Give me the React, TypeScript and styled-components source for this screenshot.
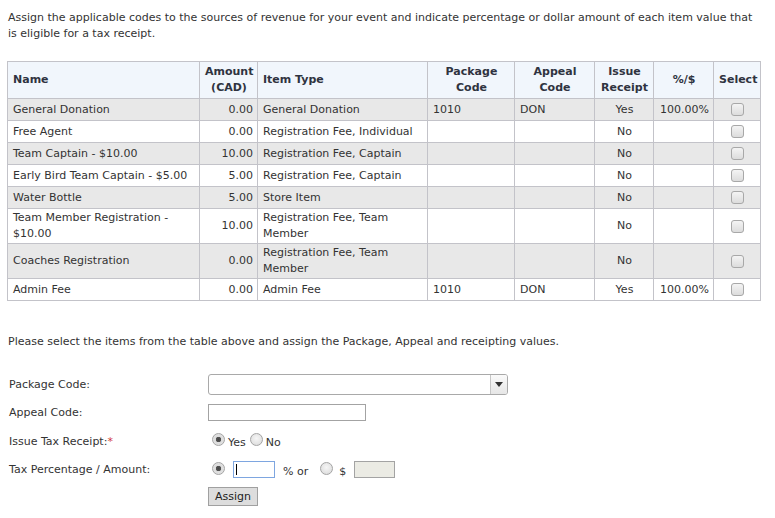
import React from 'react'
import styled, {createGlobalStyle} from 'styled-components'

const GlobalStyle = createGlobalStyle`
  body {
    margin: 0;
    background: #ffffff;
    font-family: "DejaVu Sans", Verdana, sans-serif;
    font-size: 11px;
    color: #333333;
  }
`

type Item = {
  name: string
  amount: string
  type: string
  pkg?: string
  appeal?: string
  receipt: string
  pct?: string
}

const ITEMS: Item[] = [
  {name: 'General Donation', amount: '0.00', type: 'General Donation', pkg: '1010', appeal: 'DON', receipt: 'Yes', pct: '100.00%'},
  {name: 'Free Agent', amount: '0.00', type: 'Registration Fee, Individual', receipt: 'No'},
  {name: 'Team Captain - $10.00', amount: '10.00', type: 'Registration Fee, Captain', receipt: 'No'},
  {name: 'Early Bird Team Captain - $5.00', amount: '5.00', type: 'Registration Fee, Captain', receipt: 'No'},
  {name: 'Water Bottle', amount: '5.00', type: 'Store Item', receipt: 'No'},
  {name: 'Team Member Registration - $10.00', amount: '10.00', type: 'Registration Fee, Team Member', receipt: 'No'},
  {name: 'Coaches Registration', amount: '0.00', type: 'Registration Fee, Team Member', receipt: 'No'},
  {name: 'Admin Fee', amount: '0.00', type: 'Admin Fee', pkg: '1010', appeal: 'DON', receipt: 'Yes', pct: '100.00%'},
]

const App = () => {
  return (
    <StyledPage>
      <GlobalStyle />
      <StyledIntro>
        Assign the applicable codes to the sources of revenue for your event and indicate percentage or dollar amount of each item value that
        is eligible for a tax receipt.
      </StyledIntro>

      <StyledTable>
        <colgroup>
          <col style={{width: 192}} />
          <col style={{width: 58}} />
          <col style={{width: 170}} />
          <col style={{width: 87}} />
          <col style={{width: 80}} />
          <col style={{width: 59}} />
          <col style={{width: 60}} />
          <col style={{width: 47}} />
        </colgroup>
        <thead>
          <tr>
            <StyledTh $align="left">Name</StyledTh>
            <StyledTh>Amount<br />(CAD)</StyledTh>
            <StyledTh $align="left">Item Type</StyledTh>
            <StyledTh>Package<br />Code</StyledTh>
            <StyledTh>Appeal<br />Code</StyledTh>
            <StyledTh>Issue<br />Receipt</StyledTh>
            <StyledTh>%/$</StyledTh>
            <StyledTh>Select</StyledTh>
          </tr>
        </thead>
        <tbody>
          {ITEMS.map((item, i) => (
            <StyledRow key={item.name} $shaded={i % 2 === 0}>
              <StyledTd>{item.name}</StyledTd>
              <StyledTd $align="right">{item.amount}</StyledTd>
              <StyledTd>{item.type}</StyledTd>
              <StyledTd>{item.pkg}</StyledTd>
              <StyledTd>{item.appeal}</StyledTd>
              <StyledTd $align="center">{item.receipt}</StyledTd>
              <StyledTd $align="right">{item.pct}</StyledTd>
              <StyledTd $align="center">
                <StyledCheck type="checkbox" />
              </StyledTd>
            </StyledRow>
          ))}
        </tbody>
      </StyledTable>

      <StyledNote>Please select the items from the table above and assign the Package, Appeal and receipting values.</StyledNote>

      <StyledForm>
        <StyledLabel $h={21}>Package Code:</StyledLabel>
        <StyledSelect>
          <StyledSelectArrow>
            <svg width="8" height="5" viewBox="0 0 8 5"><path d="M0 0h8L4 5z" fill="#333" /></svg>
          </StyledSelectArrow>
        </StyledSelect>

        <StyledLabel $h={17}>Appeal Code:</StyledLabel>
        <StyledText $w={158} />

        <StyledLabel $h={22}>Issue Tax Receipt:<StyledReq>*</StyledReq></StyledLabel>
        <StyledLine>
          <StyledRadio type="radio" name="receipt" defaultChecked />
          <span>Yes</span>
          <StyledRadio type="radio" name="receipt" />
          <span>No</span>
        </StyledLine>

        <StyledLabel $h={17}>Tax Percentage / Amount:</StyledLabel>
        <StyledLine>
          <StyledRadio type="radio" name="kind" defaultChecked />
          <StyledCaretBox>
            <StyledCaret />
          </StyledCaretBox>
          <StyledGap>% or</StyledGap>
          <StyledRadio type="radio" name="kind" />
          <StyledGap $tight>$</StyledGap>
          <StyledText $w={41} disabled />
        </StyledLine>

        <span />
        <StyledButton>Assign</StyledButton>
      </StyledForm>
    </StyledPage>
  )
}

const StyledPage = styled.div`
  padding: 10px 14px 10px 7px;
`

const StyledIntro = styled.p`
  margin: 0 0 0 1px;
  line-height: 16px;
`

const StyledTable = styled.table`
  margin-top: 19px;
  border-collapse: collapse;
  table-layout: fixed;
  width: 754px;
  border: 1px solid #c3c3c9;
`

const StyledTh = styled.th<{$align?: string}>`
  background: #f1f6fc;
  border: 1px solid #c3c3c9;
  font-weight: bold;
  color: #2f3340;
  line-height: 16px;
  padding: 2px 4px 2px 5px;
  height: 32px;
  text-align: ${p => p.$align || 'center'};
  vertical-align: middle;
`

const StyledRow = styled.tr<{$shaded: boolean}>`
  background: ${p => (p.$shaded ? '#e8e8e8' : '#ffffff')};
`

const StyledTd = styled.td<{$align?: string}>`
  border: 1px solid #c3c3c9;
  line-height: 16px;
  padding: 1px 4px 1px 5px;
  height: 19px;
  text-align: ${p => p.$align || 'left'};
  vertical-align: middle;
  white-space: normal;
`

const StyledCheck = styled.input`
  appearance: none;
  display: block;
  margin: 0 auto;
  width: 13px;
  height: 13px;
  border: 1px solid #a8a8a8;
  border-radius: 3px;
  background: linear-gradient(#f4f4f4, #dcdcdc);
`

const StyledNote = styled.p`
  margin: 33px 0 0 1px;
  line-height: 16px;
`

const StyledForm = styled.div`
  margin-top: 24px;
  display: grid;
  grid-template-columns: 199px auto;
  justify-content: start;
  align-items: center;
  row-gap: 9px;
  padding-left: 2px;
`

const StyledLabel = styled.div<{$h: number}>`
  height: ${p => p.$h}px;
  display: flex;
  align-items: center;
`

const StyledReq = styled.span`
  color: #d23a3a;
`

const StyledSelect = styled.div`
  width: 298px;
  height: 19px;
  border: 1px solid #a9a9a9;
  border-radius: 3px;
  background: #ffffff;
  display: flex;
  justify-content: flex-end;
`

const StyledSelectArrow = styled.div`
  width: 16px;
  border-left: 1px solid #c6c6c6;
  background: linear-gradient(#fafafa, #e6e6e6);
  border-radius: 0 2px 2px 0;
  display: flex;
  align-items: center;
  justify-content: center;
`

const StyledText = styled.input<{$w: number}>`
  box-sizing: border-box;
  width: ${p => p.$w}px;
  height: 17px;
  margin: 0;
  padding: 0 2px;
  border: 1px solid #a3a3a3;
  background: #ffffff;
  outline: none;
  &:disabled {
    background: #ebebe4;
  }
`

const StyledCaretBox = styled.div`
  box-sizing: border-box;
  width: 42px;
  height: 17px;
  margin-left: 5px;
  border: 1px solid #7ea6e0;
  padding: 2px 0 0 2px;
`

const StyledCaret = styled.div`
  width: 1px;
  height: 11px;
  background: #000;
`

const StyledLine = styled.div`
  display: flex;
  align-items: center;

  span {
    margin-top: 3px;
  }
`

const StyledRadio = styled.input`
  appearance: none;
  width: 13px;
  height: 13px;
  margin: -3px 3px 0 4px;
  border: 1px solid #a4a4a4;
  border-radius: 50%;
  background: radial-gradient(circle at 50% 40%, #f6f6f6, #d8d8d8);

  &:checked {
    background: radial-gradient(circle, #444 0, #555 2.5px, #dcdcdc 3px, #e6e6e6);
  }
`

const StyledGap = styled.span<{$tight?: boolean}>`
  margin: 3px 8px 0 ${p => (p.$tight ? '3px' : '8px')};
`

const StyledButton = styled.button`
  justify-self: start;
  width: 50px;
  height: 19px;
  padding: 0;
  border: 1px solid #a0a0a0;
  background: #dddddd;
  font-family: "DejaVu Sans", Verdana, sans-serif;
  font-size: 11px;
  color: #222;
`

export default App
